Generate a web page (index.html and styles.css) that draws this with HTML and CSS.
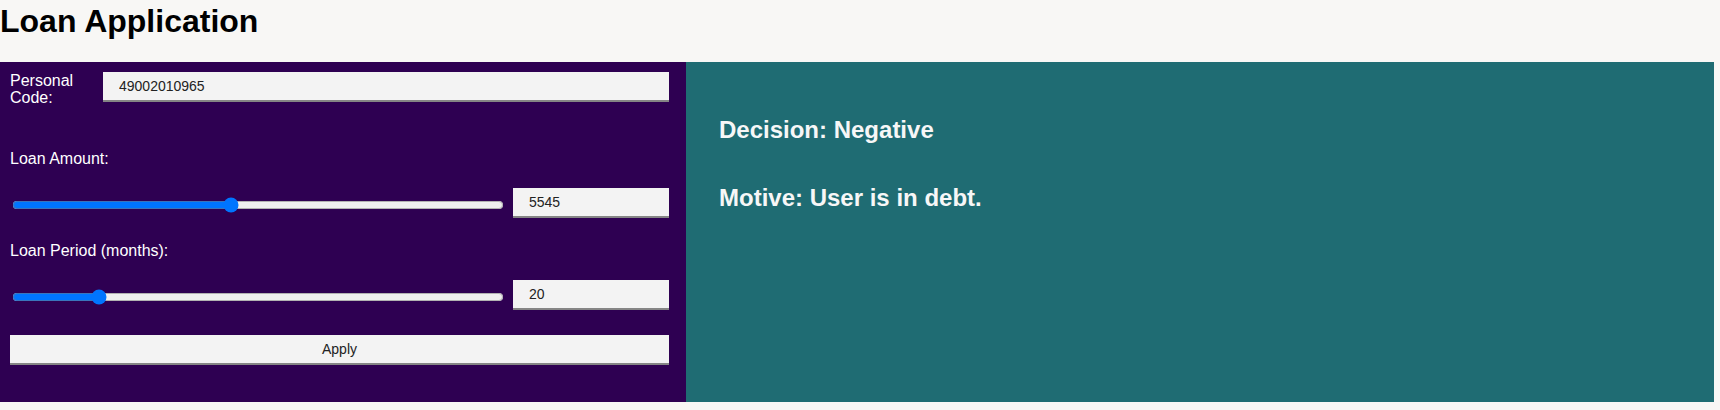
FILE: index.html
```html
<!DOCTYPE html>
<html lang="en">
<head>
<meta charset="utf-8">
<title>Loan Application</title>
<link rel="stylesheet" href="styles.css">
</head>
<body>
<header class="page-header">
  <h1 class="page-title">Loan Application</h1>
</header>
<main class="layout">
  <section class="form-panel">
    <div class="code-row">
      <label class="code-label" for="code">Personal Code:</label>
      <input class="text-field code-field" id="code" type="text" value="49002010965">
    </div>
    <label class="field-label" for="amount">Loan Amount:</label>
    <div class="slider-row">
      <input class="slider" id="amount" type="range" min="2000" max="10000" value="5545">
      <input class="text-field value-field" type="text" value="5545">
    </div>
    <label class="field-label" for="period">Loan Period (months):</label>
    <div class="slider-row">
      <input class="slider" id="period" type="range" min="12" max="60" value="20">
      <input class="text-field value-field" type="text" value="20">
    </div>
    <button class="apply-btn" type="button">Apply</button>
  </section>
  <section class="result-panel">
    <h2 class="result-line">Decision: Negative</h2>
    <h2 class="result-line">Motive: User is in debt.</h2>
  </section>
</main>
</body>
</html>
```

FILE: styles.css
```css
html, body {
  margin: 0;
  padding: 0;
}
body {
  background: #f8f7f5;
  font-family: "Liberation Sans", Arial, sans-serif;
  color: #000;
}
.page-header {
  padding-top: 3px;
  height: 62px;
  box-sizing: border-box;
}
.page-title {
  margin: 0;
  font-size: 32px;
  font-weight: bold;
  line-height: 37px;
}
.layout {
  display: grid;
  grid-template-columns: 686px 1fr;
  margin-right: 6px;
  height: 340px;
}
.form-panel {
  background: #2e0052;
  padding: 10px 17px 0 10px;
  display: flex;
  flex-direction: column;
  color: #fff;
}
.code-row {
  display: flex;
  align-items: flex-start;
  gap: 8px;
  margin-bottom: 44px;
}
.code-label {
  width: 85px;
  font-size: 16px;
  line-height: 17px;
}
.text-field {
  box-sizing: border-box;
  height: 30px;
  border: none;
  border-bottom: 2px solid #858585;
  background: #f3f3f3;
  color: #222;
  font-family: "Liberation Sans", Arial, sans-serif;
  font-size: 14px;
  padding: 0 16px;
  outline: none;
  border-radius: 0;
}
.code-field {
  flex: 1;
}
.field-label {
  font-size: 16px;
  line-height: 18px;
  margin-bottom: 20px;
}
.slider-row {
  display: flex;
  align-items: center;
  gap: 7px;
  margin-bottom: 24px;
}
.slider {
  flex: 1;
  margin: 4px 2px 0 2px;
  min-width: 0;
}
.value-field {
  width: 156px;
  flex: none;
}
.apply-btn {
  box-sizing: border-box;
  height: 30px;
  margin-top: 1px;
  border: none;
  border-bottom: 2px solid #858585;
  background: #f3f3f3;
  color: #222;
  font-family: "Liberation Sans", Arial, sans-serif;
  font-size: 14px;
  padding: 0;
  border-radius: 0;
}
.result-panel {
  background: #1f6c73;
  color: #f7f7f7;
  padding: 54px 0 0 33px;
  display: flex;
  flex-direction: column;
  gap: 40px;
}
.result-line {
  margin: 0;
  font-size: 24px;
  font-weight: bold;
  line-height: 28px;
}
```
